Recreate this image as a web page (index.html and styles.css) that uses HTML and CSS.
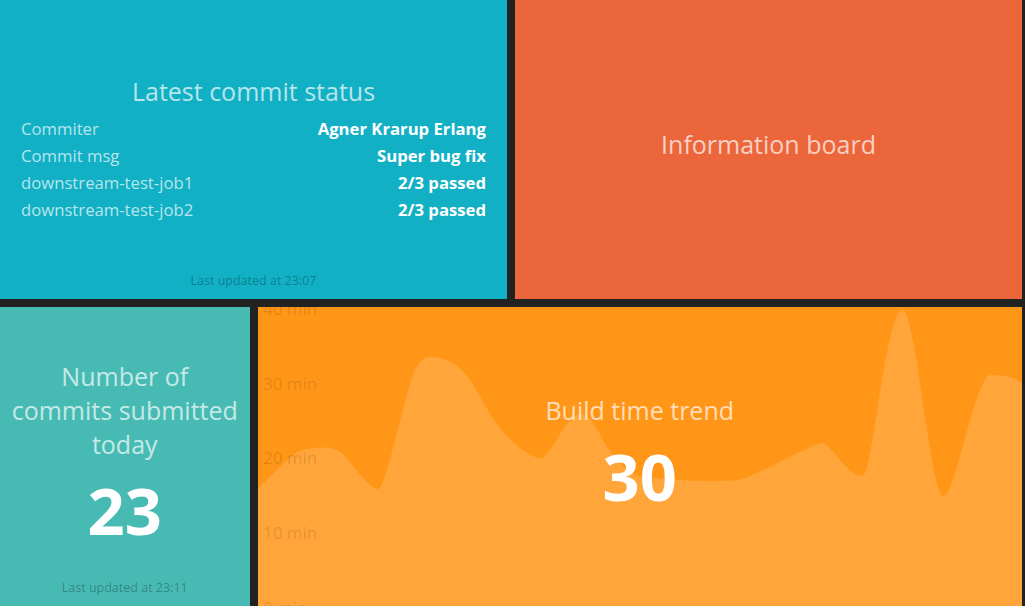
FILE: index.html
```html
<!DOCTYPE html>
<html lang="en">
<head>
  <meta charset="UTF-8">
  <title>Dashboard</title>
  <link rel="stylesheet" href="styles.css">
</head>
<body>

<div class="gridster">
  <div class="widget widget-list span-2">
    <div class="content">
      <h1 class="title">Latest commit status</h1>
      <ul class="list">
        <li><span class="label">Commiter</span><span class="value">Agner Krarup Erlang</span></li>
        <li><span class="label">Commit msg</span><span class="value">Super bug fix</span></li>
        <li><span class="label">downstream-test-job1</span><span class="value">2/3 passed</span></li>
        <li><span class="label">downstream-test-job2</span><span class="value">2/3 passed</span></li>
      </ul>
    </div>
    <p class="updated-at">Last updated at 23:07</p>
  </div>

  <div class="widget widget-text span-2">
    <div class="content">
      <h1 class="title">Information board</h1>
    </div>
  </div>

  <div class="widget widget-number">
    <div class="content">
      <h1 class="title">Number of commits submitted today</h1>
      <h2 class="value">23</h2>
    </div>
    <p class="updated-at">Last updated at 23:11</p>
  </div>

  <div class="widget widget-graph span-3">
    <svg class="graph" viewBox="257 307 765 299" preserveAspectRatio="none">
      <path class="area" d="M257,488
        C275,472 290,452 305,449
        C320,446 335,447 342,454
        C355,468 368,489 377,489
        C385,489 400,410 412,375
        C418,360 423,357 430,357
        C445,357 458,365 468,378
        C480,395 490,420 505,435
        C520,450 532,458 540,458
        C550,458 565,414 580,414
        C592,414 600,440 612,455
        C625,470 635,478 650,478
        C665,478 680,481 705,481
        C725,481 735,481 745,478
        C770,468 800,450 820,443
        C830,441 845,475 862,476
        C872,477 885,310 902,310
        C915,310 930,496 943,496
        C955,496 975,375 990,375
        C1005,375 1015,378 1022,383
        L1022,606 L257,606 Z"/>
      <text class="axis" x="262" y="309">40 min</text>
      <text class="axis" x="262" y="384">30 min</text>
      <text class="axis" x="262" y="458">20 min</text>
      <text class="axis" x="262" y="533">10 min</text>
      <text class="axis" x="262" y="608">0 min</text>
    </svg>
    <div class="content">
      <h1 class="title">Build time trend</h1>
      <h2 class="value">30</h2>
    </div>
  </div>
</div>

</body>
</html>
```

FILE: styles.css
```css
body {
  margin: 0;
  background: #222222;
  font-family: "Open Sans", "Liberation Sans", sans-serif;
  height: 606px;
  overflow: hidden;
}
.gridster {
  width: 1022px;
  display: grid;
  grid-template-columns: repeat(4, 1fr);
  grid-template-rows: 299px 299px;
  gap: 8px;
}
.span-2 {
  grid-column: span 2;
}
.span-3 {
  grid-column: span 3;
}
.widget {
  position: relative;
  overflow: hidden;
  display: grid;
  grid-template-rows: 1fr auto 1fr;
  color: #ffffff;
  text-align: center;
}
.content {
  grid-row: 2;
  position: relative;
  padding-bottom: 6px;
}
.title {
  margin: 0 0 10px;
  font-size: 25px;
  line-height: 34px;
  font-weight: 400;
  color: rgba(255, 255, 255, 0.7);
}
.value {
  margin: 0;
  font-size: 65px;
  line-height: 78px;
  font-weight: 700;
  color: #ffffff;
}
.updated-at {
  grid-row: 3;
  align-self: end;
  margin: 0 0 10px;
  font-size: 12.5px;
  line-height: 17px;
  color: rgba(0, 0, 0, 0.3);
}

/* list */
.widget-list {
  background: #12b0c5;
}
.widget-list .content {
  padding-bottom: 0;
}
.widget-list .title {
  line-height: 28px;
  margin-bottom: 10px;
}
.list {
  list-style: none;
  margin: 0;
  padding: 0 21px;
}
.list li {
  display: flex;
  justify-content: space-between;
  font-size: 16.7px;
  line-height: 27px;
}
.list .label {
  color: rgba(255, 255, 255, 0.7);
}
.list .value {
  font-size: 16.7px;
  line-height: 27px;
  font-weight: 700;
}

/* text */
.widget-text {
  background: #ec663c;
}
.widget-text .content {
  padding-bottom: 2px;
}

/* number */
.widget-number {
  background: #47bbb3;
}
.widget-number .title {
  padding: 0 10px;
}

/* graph */
.widget-graph {
  background: #ff9618;
}
.graph {
  position: absolute;
  top: 0;
  left: 0;
  width: 100%;
  height: 100%;
}
.graph .area {
  fill: rgba(255, 255, 255, 0.15);
}
.graph .axis {
  font-family: "Open Sans", "Liberation Sans", sans-serif;
  font-size: 17px;
  fill: rgba(0, 0, 0, 0.13);
  dominant-baseline: central;
}
```
